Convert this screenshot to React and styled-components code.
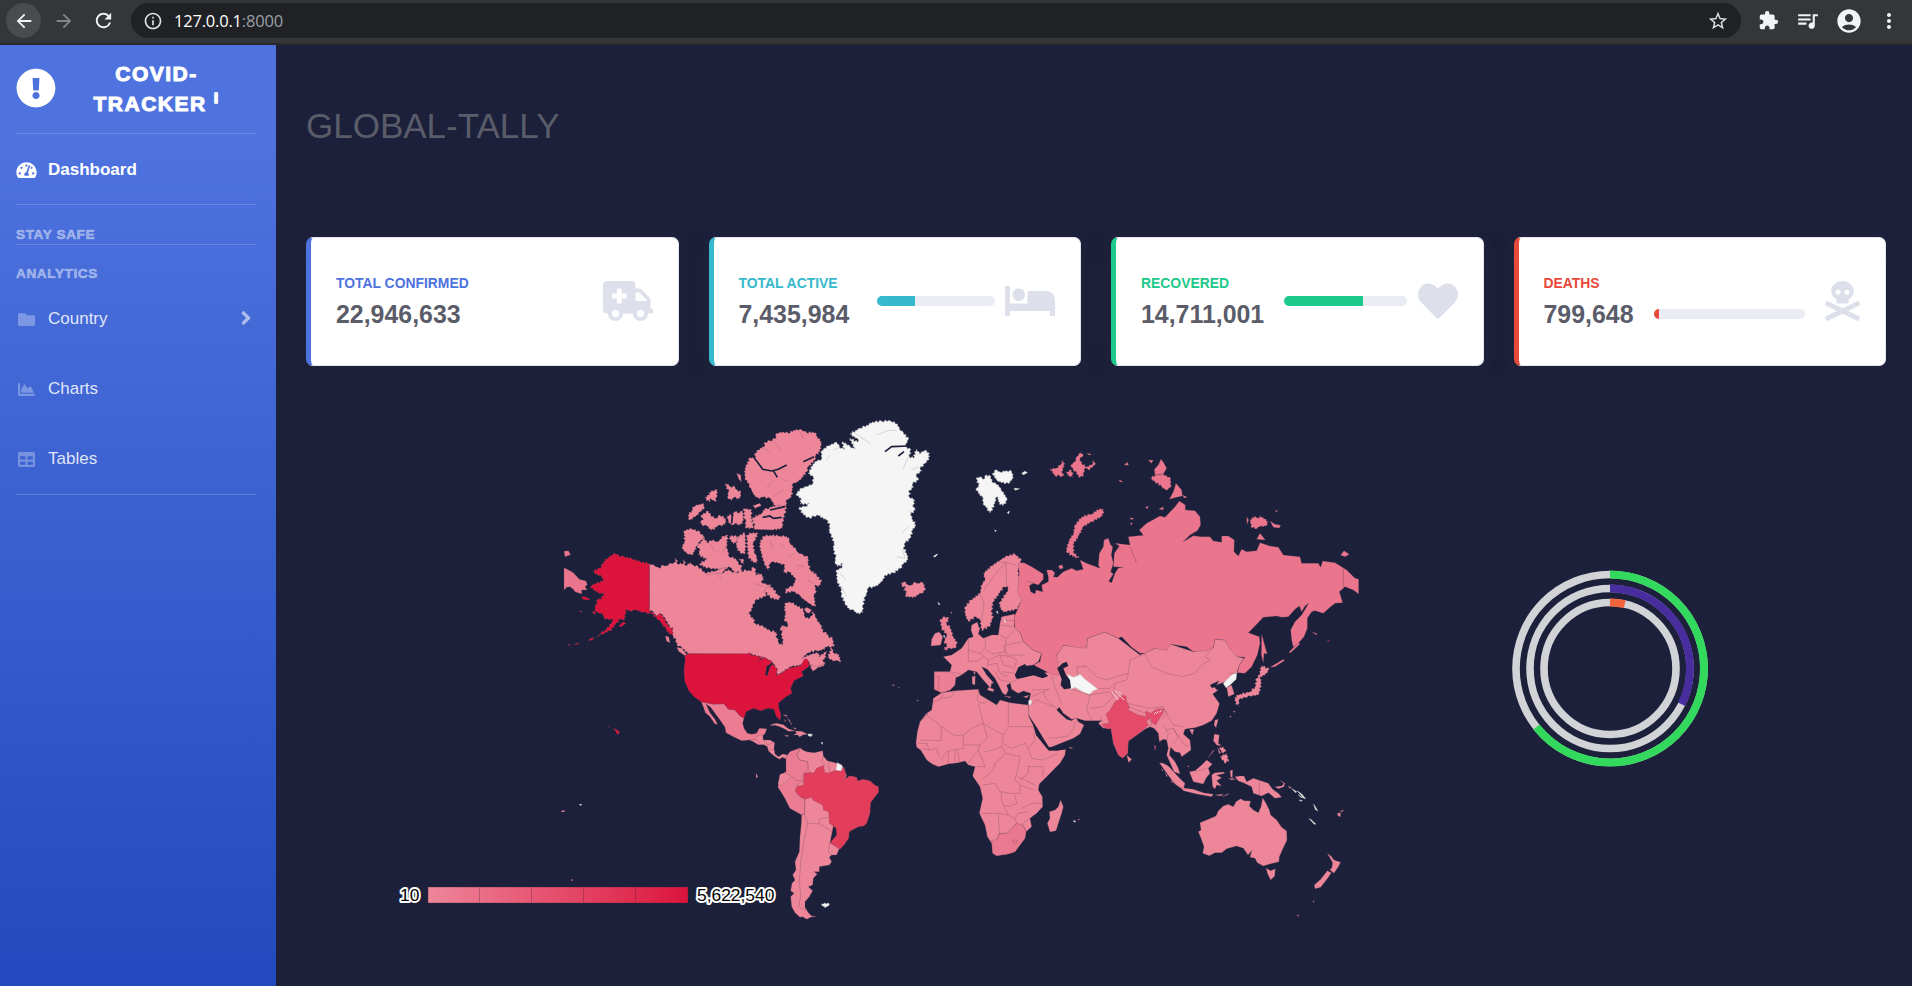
import React from "react";
import styled, { createGlobalStyle } from "styled-components";
import {
  FaExclamationCircle, FaTachometerAlt, FaFolder, FaChartArea, FaTable, FaAngleRight,
  FaAmbulance, FaBed, FaHeart, FaSkullCrossbones,
} from "react-icons/fa";
import {
  MdArrowBack, MdArrowForward, MdRefresh, MdInfoOutline, MdStarBorder, MdExtension,
  MdQueueMusic, MdAccountCircle, MdMoreVert,
} from "react-icons/md";

const NAVY = "#1c203a";

const GlobalStyle = createGlobalStyle`
  *, *::before, *::after { box-sizing: border-box; }
  html, body { margin: 0; padding: 0; overflow: hidden; background: ${NAVY}; }
  body { font-family: "Liberation Sans", Arial, sans-serif; }
  svg { display: block; flex: none; }
`;

const Page = styled.div`
  width: 1912px;
  height: 986px;
  display: flex;
  flex-direction: column;
`;

/* ---------- browser toolbar ---------- */
const Toolbar = styled.header`
  height: 45px;
  flex: none;
  display: flex;
  align-items: flex-start;
  padding: 3px 0 0 6px;
  background: #35363a;
  border-bottom: 2px solid #292a2b;
`;
const ToolButton = styled.span`
  width: 35px;
  height: 35px;
  margin-right: ${(p) => p.$gap || 0}px;
  border-radius: 50%;
  display: flex;
  align-items: center;
  justify-content: center;
  font-size: ${(p) => p.$size || 22}px;
  color: ${(p) => (p.$dim ? "#85868a" : "#f1f3f4")};
  background: ${(p) => (p.$active ? "#4a4b4f" : "transparent")};
`;
const AddressBar = styled.div`
  width: 1610px;
  height: 35px;
  margin-right: 10px;
  padding: 0 12px;
  border-radius: 18px;
  background: #202124;
  color: #dfe1e5;
  display: flex;
  align-items: center;
`;
const Url = styled.span`
  flex: 1;
  margin-left: 11px;
  font: 16.5px "Open Sans", "Noto Sans", sans-serif;
  letter-spacing: -0.2px;
  color: #fff;
`;
const Port = styled.span`
  color: #9aa0a6;
`;

/* ---------- sidebar ---------- */
const Body = styled.div`
  flex: 1;
  display: flex;
  min-height: 0;
`;
const Sidebar = styled.nav`
  width: 276px;
  flex: none;
  padding: 0 20px 0 16px;
  background: linear-gradient(180deg, #4e73df 10%, #224abe 100%);
`;
const Brand = styled.div`
  height: 88px;
  padding-bottom: 2px;
  display: flex;
  align-items: center;
  color: #fff;
`;
const BrandName = styled.div`
  flex: 1;
  padding: 2px 0 0 1px;
  text-align: center;
  font-size: 21px;
  font-weight: 700;
  line-height: 30px;
  letter-spacing: 1.5px;
  -webkit-text-stroke: 1px #fff;
  sup { font-size: 14.5px; line-height: 0; vertical-align: 8px; -webkit-text-stroke-width: 1.6px; }
`;
const Divider = styled.hr`
  height: 1px;
  margin: 0;
  border: 0;
  background: rgba(255, 255, 255, 0.17);
`;
const Heading = styled.div`
  height: ${(p) => p.$height}px;
  padding-top: ${(p) => p.$top}px;
  font-size: 13.6px;
  line-height: 16px;
  font-weight: 700;
  letter-spacing: 0.6px;
  color: rgba(255, 255, 255, 0.42);
  -webkit-text-stroke: 0.7px rgba(255, 255, 255, 0.35);
`;
const NavItem = styled.div`
  height: 70px;
  padding-top: ${(p) => (p.$active ? 2 : 0)}px;
  display: flex;
  align-items: center;
  font-size: 17px;
  font-weight: ${(p) => (p.$active ? 700 : 400)};
  color: ${(p) => (p.$active ? "#fff" : "rgba(255,255,255,.85)")};
  > svg:first-child {
    width: 21px;
    height: ${(p) => (p.$active ? 18 : 17)}px;
    margin-right: 11px;
    color: ${(p) => (p.$active ? "#fff" : "rgba(255,255,255,.3)")};
  }
`;
const NavLabel = styled.span`
  flex: 1;
`;
const Caret = styled(FaAngleRight)`
  width: 20px;
  height: 22px;
  margin: -3px 0 0;
  color: rgba(255, 255, 255, 0.55);
`;

/* ---------- main area ---------- */
const Main = styled.main`
  flex: 1;
  min-width: 0;
  padding: 0 26px 0 30px;
  background: ${NAVY};
`;
const Title = styled.h1`
  height: 192px;
  margin: 0;
  padding-top: 60px;
  font-size: 35px;
  line-height: 42px;
  font-weight: 400;
  color: #5a5c69;
`;
const Cards = styled.section`
  display: grid;
  grid-template-columns: repeat(4, 1fr);
  gap: 30px;
`;
const Card = styled.article`
  height: 129px;
  padding: 0 25px 2px;
  display: flex;
  align-items: center;
  justify-content: space-between;
  background: #fff;
  border: 1px solid #e3e6f0;
  border-left: 5px solid ${(p) => p.$color};
  border-radius: 7px;
  box-shadow: 0 3px 34px rgba(58, 59, 69, 0.08);
`;
const Stat = styled.div`
  flex: none;
`;
const StatLabel = styled.div`
  font-size: 13.9px;
  line-height: 20px;
  font-weight: 700;
  color: ${(p) => p.$color};
`;
const StatValue = styled.div`
  margin-top: 6px;
  font-size: 24.9px;
  line-height: 30px;
  font-weight: 700;
  color: #5a5c69;
`;
const Track = styled.div`
  width: ${(p) => p.$width}px;
  height: 10px;
  margin-left: auto;
  margin-right: ${(p) => p.$right}px;
  margin-top: ${(p) => p.$drop || 0}px;
  border-radius: 6px;
  overflow: hidden;
  background: #eaecf4;
`;
const Fill = styled.div`
  height: 100%;
  width: ${(p) => p.$value}%;
  background: ${(p) => p.$color};
`;
const CardIcon = styled.div`
  color: #dddfeb;
  svg { width: ${(p) => p.$width}px; height: 40px; }
`;
const Charts = styled.section`
  display: flex;
  align-items: flex-start;
  padding-top: 30px;
`;
const MapSvg = styled.svg`
  width: 1160px;
  height: 560px;
`;
const RingSvg = styled.svg`
  width: 220px;
  height: 220px;
  margin: 162px 0 0 34px;
`;
const ScaleLabel = styled.text`
  font-size: 17.4px;
  fill: #000;
  stroke: #fff;
  stroke-width: 4px;
  stroke-linejoin: round;
  paint-order: stroke;
`;

const PINK = "#ee869a", ROSE = "#ea758c", RED = "#dc143c", BRAZIL = "#e23e5c", INDIA = "#e54b69", NODATA = "#f5f5f5";

/* Outlines are kept at three units per pixel, one sheet for each hemisphere. */
const west = [
  // Canada mainland
  [PINK, "328,461 344,467 358,475 368,465 380,467 392,460 402,458 408,443 414,463 421,456 428,462 433,448 437,467 452,457 460,465 475,470 486,480 495,489 520,484 530,488 543,475 546,490 565,478 578,488 585,480 592,490 600,470 605,484 618,480 630,484 640,470 648,480 646,495 656,488 672,500 665,518 685,524 694,520 690,533 680,545 675,560 650,568 640,582 640,592 629,605 632,620 640,622 645,640 670,650 690,662 710,665 710,683 716,687 716,698 726,706 730,690 724,685 726,668 721,655 725,645 740,652 742,640 732,628 736,610 732,590 738,578 750,575 770,585 790,600 795,620 806,626 815,617 820,604 825,618 832,628 845,650 848,664 860,668 865,680 878,685 882,710 860,711 845,722 830,722 805,728 785,745 810,733 838,727 836,740 862,722 855,735 860,740 848,750 857,758 850,768 835,770 818,784 812,772 808,758 798,747 785,765 755,770 740,778 725,790 708,797 712,780 700,762 685,750 660,740 630,732 443,731 425,712 410,705 408,690 400,680 395,672 399,658 388,650 376,628 362,612 348,618 340,606 328,604", 1],
  [RED, "225,430 236,437 252,440 275,446 300,455 328,461 328,604 340,606 348,618 362,610 376,632 388,650 399,658 396,674 386,672 376,655 362,635 350,625 335,612 318,608 302,605 285,600 275,606 262,598 256,612 258,620 250,630 240,628 228,643 210,662 200,668 185,672 170,680 178,672 195,660 205,652 215,635 218,628 205,628 192,625 188,614 176,608 168,610 166,596 162,588 172,580 165,570 180,568 195,548 185,552 168,545 150,530 165,520 188,514 185,498 165,492 158,483 180,475 190,455 205,442", 1],
  [RED, "144,692 150,686 163,682 158,689"], [RED, "103,704 110,699 120,702 110,703"], [RED, "85,702 92,705 87,707"],
  [RED, "124,560 136,560 150,567 142,571 128,567"], [RED, "118,602 127,604 122,607"], [RED, "236,648 250,635 258,640 244,650"], [RED, "156,606 166,604 164,614"],
  [RED, "443,731 625,731 627,726 632,734 660,740 668,738 655,752 675,742 685,750 698,755 692,762 680,768 676,795 682,797 690,770 700,762 712,780 708,796 725,790 745,775 782,767 793,748 798,746 804,750 808,768 785,785 790,798 770,808 762,812 752,835 756,850 738,860 716,878 716,892 723,915 720,931 708,918 702,898 685,895 662,902 640,895 618,905 612,925 600,918 584,900 565,898 552,882 520,883 484,876 460,858 445,840 434,812 432,780 436,745 432,735 440,736"],
  [PINK, "376,678 386,680 390,698 380,694"], [PINK, "410,712 425,715 441,735 432,735 416,724"],
  // Ellesmere
  [PINK, "645,130 660,114 672,110 675,97 690,92 705,86 710,70 730,65 745,70 760,60 785,59 800,68 818,65 830,72 832,80 845,95 840,125 827,137 825,150 805,170 800,185 790,200 775,215 758,222 758,240 755,262 742,268 738,285 735,292 720,287 708,292 700,280 690,265 668,262 655,265 640,255 632,240 628,225 615,205 614,175 630,143 645,143", 1],
  [PINK, "640,322 665,310 668,300 680,296 700,288 740,285 735,310 728,335 728,355 700,360 640,358 645,345 636,335", 1],
  [PINK, "590,190 602,195 604,216 597,208"],
  [PINK, "555,220 565,222 572,230 585,230 592,240 603,246 600,268 582,262 575,272 562,262 566,245", 1],
  [PINK, "494,262 508,255 506,248 515,241 532,239 530,262 525,275 512,265 508,277", 1],
  [PINK, "443,315 455,302 460,290 478,282 492,282 492,298 480,305 475,315 462,320 458,330 445,327", 1],
  [PINK, "476,338 490,330 482,316 505,303 512,316 528,325 540,315 558,325 556,345 540,345 530,352 515,362 500,348 486,345", 1],
  [PINK, "562,318 570,310 578,320 580,302 592,308 608,302 612,330 600,348 590,340 575,345 565,335", 1],
  [PINK, "612,295 635,300 635,320 640,355 628,357 615,350 618,335 612,320", 1], [PINK, "638,285 660,280 665,290 645,295"],
  [PINK, "432,362 455,356 480,366 495,382 480,395 470,408 464,425 455,435 440,430 425,415 433,395", 1],
  [PINK, "470,408 482,395 495,384 500,398 520,388 530,395 540,388 550,378 564,376 560,410 568,440 588,445 595,460 606,470 600,486 585,488 570,472 545,478 510,475 490,472 478,460 500,448 475,435 480,420", 1],
  [PINK, "495,490 520,486 545,475 560,474 545,490 525,492 505,495"],
  [PINK, "566,377 595,378 590,398 580,402 573,395", 1], [PINK, "592,380 615,368 618,420 612,432 600,428 588,412", 1],
  [PINK, "620,375 640,366 655,370 640,398 642,425 650,440 652,460 640,458 625,440 622,420", 1], [PINK, "598,445 612,450 612,462 602,458", 1],
  [PINK, "670,378 690,375 720,378 740,378 748,388 750,400 768,418 775,428 790,435 805,442 805,460 812,480 830,495 845,515 835,532 825,525 828,548 822,555 826,590 812,585 795,572 785,565 778,555 760,545 735,548 740,532 757,530 768,508 748,486 730,490 735,465 715,460 700,455 690,462 685,482 673,460 663,430 658,400", 1],
  [PINK, "672,542 685,528 700,535 712,552 722,562 712,570 690,562", 1], [PINK, "792,598 800,592 815,600 808,610 800,608"], [PINK, "721,655 730,646 733,655 725,662"],
  [PINK, "862,743 875,712 882,730 890,728 901,742 900,758 892,752 878,752", 1],
  [PINK, "818,784 812,762 825,770 845,765 857,758 850,768 835,772"],
  [ROSE, "72,473 90,482 100,488 118,508 138,513 142,524 135,530 142,540 125,540 125,552 105,545 100,538 90,530 80,532 72,540"],
  [ROSE, "72,424 85,422 92,434 75,440"],
  // Greenland
  [NODATA, "960,55 980,46 998,36 1025,34 1052,33 1072,42 1078,58 1090,68 1105,88 1098,100 1100,112 1112,120 1108,140 1120,145 1130,118 1138,132 1145,125 1160,122 1170,139 1155,160 1140,175 1145,182 1128,195 1135,210 1118,220 1120,232 1108,240 1108,262 1125,270 1118,285 1125,300 1112,312 1118,330 1128,345 1118,360 1110,385 1096,398 1090,412 1100,430 1104,448 1090,462 1080,475 1060,488 1035,495 1028,512 1020,520 1005,530 985,533 982,545 975,560 968,585 968,607 950,610 942,600 930,600 915,580 905,555 903,535 892,515 890,480 905,475 908,460 893,470 885,455 888,440 880,420 882,400 875,375 868,368 870,345 860,330 835,316 822,318 810,325 790,315 778,292 795,290 810,281 780,282 785,268 768,252 785,235 800,230 818,222 820,200 805,190 825,155 845,148 845,122 865,108 890,97 898,110 912,120 908,95 930,110 945,118 930,85 952,97 955,88 930,72", 1],
  [PINK, "1084,517 1098,516 1103,524 1115,525 1125,516 1135,520 1142,515 1150,517 1156,540 1145,550 1135,555 1118,564 1095,558 1100,545 1088,542 1098,532 1085,528", 1],
  // Mexico, Central America and the Caribbean
  ["#ec7c92", "484,876 520,883 552,882 565,898 584,900 600,918 612,925 608,940 612,955 622,970 635,973 650,970 658,955 680,956 676,970 668,978 652,978 648,990 628,990 605,992 580,980 558,968 555,952 540,930 525,910 512,892 498,882 510,908 525,928 533,943 525,942 508,918 496,908 490,890"],
  [PINK, "628,990 648,990 648,982 655,976 668,974 670,990 690,990 704,998 702,1015 705,1032 716,1040 728,1032 740,1034 744,1042 735,1046 728,1042 718,1048 708,1042 695,1032 685,1022 682,1010 672,1004 655,1004 640,995"],
  [PINK, "690,947 698,942 710,940 730,944 745,956 765,963 745,964 734,957 720,950 705,946"],
  [PINK, "765,963 785,964 803,973 790,974 778,981 774,975 760,975 770,970"], [PINK, "733,975 748,977 740,980"],
  [PINK, "728,914 742,916 740,920"], [PINK, "742,922 752,935 748,935"], [PINK, "733,928 738,932 735,935"], [PINK, "752,935 756,945 752,942"], [PINK, "760,952 770,956 764,958"],
  [NODATA, "804,972 817,973 814,979 806,978"], [NODATA, "843,997 848,998 847,1003"],
  // South America
  [PINK, "738,1042 750,1025 765,1020 782,1014 788,1020 800,1025 822,1028 848,1022 850,1038 862,1052 885,1058 905,1064 912,1080 920,1095 900,1150 870,1298 898,1315 890,1335 875,1335 868,1342 875,1355 868,1365 838,1370 838,1385 822,1385 832,1392 820,1405 818,1425 805,1430 818,1442 808,1460 795,1475 795,1492 805,1508 815,1518 830,1519 812,1522 800,1528 788,1520 780,1522 765,1508 755,1490 752,1460 762,1450 752,1442 756,1420 765,1410 758,1395 768,1380 765,1355 778,1325 780,1280 784,1240 785,1214 750,1195 735,1165 722,1140 714,1132 718,1115 720,1098 738,1085 740,1060"],
  ["#ec7c92", "738,1042 750,1025 782,1014 770,1035 780,1050 803,1055 805,1080 790,1090 790,1112 765,1130 778,1160 795,1168 793,1212 785,1214 750,1195 735,1165 714,1132 720,1098 738,1085"],
  [PINK, "720,1093 735,1088 752,1098 745,1112 720,1128 714,1122"],
  [BRAZIL, "792,1090 810,1087 820,1090 830,1075 850,1066 855,1088 868,1088 888,1080 905,1082 912,1070 918,1095 912,1108 930,1097 950,1102 953,1112 970,1108 990,1112 1005,1126 1016,1130 1016,1147 1005,1160 992,1178 990,1210 980,1240 972,1248 955,1250 928,1265 926,1285 912,1305 900,1318 888,1310 870,1298 890,1275 888,1255 868,1240 866,1205 850,1200 848,1185 818,1170 815,1162 795,1168 780,1160 765,1143 772,1128 790,1126"],
  [NODATA, "892,1058 907,1068 903,1082 888,1080"],
  [NODATA, "845,1482 855,1479 868,1482 865,1488 855,1493 847,1488", 1],
  [PINK, "648,1090 654,1100 648,1104"], [RED, "220,955 228,958 240,966 232,974 227,964"], [RED, "203,950 209,949 207,952"],
  [PINK, "63,1203 75,1201 73,1206 66,1206"], [NODATA, "118,1183 125,1184 122,1187"], [PINK, "93,1408 97,1408 97,1413 94,1413"],
  [PINK, "1056,824 1063,824 1062,829"], [PINK, "1074,830 1080,832 1076,833"], [PINK, "1129,871 1136,871 1133,874"], [NODATA, "1181,439 1192,432 1190,436 1183,441"],
];

const east = [
  // Africa
  [PINK, "125,848 165,842 235,838 240,855 262,868 290,885 300,870 330,878 385,885 388,915 400,945 410,975 430,995 447,1020 470,1022 497,1018 495,1035 480,1060 465,1075 440,1100 418,1122 415,1140 427,1160 428,1190 410,1210 390,1225 395,1250 378,1265 375,1285 345,1325 325,1332 290,1337 278,1330 275,1300 262,1280 255,1245 238,1210 248,1165 240,1130 218,1098 225,1070 205,1065 195,1053 175,1058 145,1062 115,1070 98,1063 80,1050 62,1020 50,1012 48,1000 52,965 60,935 80,910 95,900 100,865"],
  ["#ea788e", "275,1290 290,1290 298,1270 325,1270 350,1240 368,1245 378,1265 375,1285 345,1325 325,1332 290,1337 278,1330"],
  // Asia south of Russia
  [PINK, "470,735 490,706 560,712 562,685 615,666 655,685 720,735 765,715 812,703 880,725 940,712 945,688 975,690 1012,740 1032,745 1018,765 1010,790 975,815 950,825 957,812 930,825 936,834 945,832 948,838 955,840 938,852 957,878 958,882 950,910 935,932 910,945 885,953 870,955 855,958 850,972 870,990 873,1020 845,1040 840,1028 825,1025 812,1012 808,1035 825,1055 835,1075 840,1092 822,1085 812,1062 800,1035 805,1015 800,990 790,988 778,995 775,970 762,955 750,950 735,958 685,993 683,1030 668,1044 655,1035 640,1000 633,955 610,955 595,940 605,932 555,932 530,925 515,928 490,910 478,892 470,900 480,910 500,928 515,932 528,922 535,935 552,945 540,972 520,985 445,1015 435,1000 415,965 388,925 385,885 392,850 370,843 355,850 335,838 330,815 350,805 400,795 450,785 470,790"],
  // Continental Europe
  [PINK, "213,660 215,645 232,636 236,650 240,655 235,672 250,685 275,675 295,675 300,640 305,620 345,612 343,650 362,670 370,695 400,720 425,730 415,755 400,765 360,770 345,795 350,808 330,820 320,826 325,840 318,855 308,850 298,830 285,805 262,778 245,770 260,795 282,820 275,820 272,835 250,810 230,785 205,780 185,795 165,805 165,825 150,840 125,848 103,838 103,785 150,785 155,765 130,740 155,735 185,715 205,685 220,680"],
  [PINK, "195,590 213,570 240,550 245,525 255,508 250,490 275,468 300,450 322,437 345,432 365,450 355,480 358,520 367,570 350,598 310,607 298,590 300,575 322,545 325,532 312,530 300,548 280,575 275,600 278,625 268,650 245,662 240,630 228,620 205,635 195,615", 1],
  ["#ec7f94", "103,785 150,785 168,798 165,825 150,840 125,848 103,838"],
  ["#ec7f94", "120,628 135,620 147,625 140,642 150,650 160,680 172,700 165,715 150,715 130,722 140,705 132,695 140,675 125,655", 1],
  [PINK, "93,708 95,688 105,670 118,666 128,680 122,705"],
  [PINK, "265,832 282,838 280,845 262,840"], [PINK, "216,800 226,798 225,825 217,822"], [PINK, "220,785 226,785 224,796"], [PINK, "312,858 332,860 330,864"], [PINK, "370,860 388,855 380,864"],
  // Russia
  [ROSE, "355,460 372,458 395,470 430,492 430,508 415,525 395,518 382,513 400,520 388,527 392,545 405,552 408,540 428,545 425,525 445,515 445,500 440,480 455,480 465,488 460,500 472,502 490,485 515,475 530,482 550,478 540,450 560,460 600,475 595,465 598,430 610,410 612,390 625,385 632,405 638,410 634,435 640,460 632,485 640,492 626,514 635,518 645,490 655,474 670,472 640,470 643,430 658,408 645,400 690,405 685,380 730,376 718,360 740,340 780,318 795,322 825,290 838,273 856,285 856,300 885,302 900,320 902,345 892,362 870,375 850,395 880,377 905,380 930,380 940,393 965,397 965,378 985,378 1003,390 1002,425 1015,438 1025,418 1040,425 1070,422 1080,398 1110,408 1135,412 1150,435 1175,438 1200,440 1205,460 1255,460 1262,472 1268,453 1305,458 1340,480 1365,505 1376,508 1376,552 1360,540 1335,530 1318,545 1328,578 1305,580 1290,592 1270,610 1245,602 1235,605 1222,625 1222,655 1212,680 1195,700 1180,712 1175,690 1172,660 1185,635 1205,615 1226,580 1215,588 1205,605 1198,588 1185,598 1165,620 1145,622 1130,618 1090,622 1068,645 1045,668 1078,680 1080,700 1072,735 1055,770 1035,790 1012,788 1018,765 1035,742 1012,740 990,718 975,690 945,688 940,712 920,722 880,725 860,710 812,703 800,722 765,715 735,730 720,730 695,712 665,680 655,685 615,666 600,672 562,685 560,715 530,712 490,706 480,722 470,735 475,755 472,775 475,795 460,795 430,780 400,765 420,755 425,730 400,720 370,695 362,670 345,655 343,620 365,570 352,545 355,520 358,490"],
  [ROSE, "600,295 612,297 608,318 575,335 550,350 538,375 522,400 520,425 537,445 518,440 498,425 505,395 520,370 525,345 545,320 575,312", 1],
  [ROSE, "783,147 792,160 800,175 790,192 765,195 763,178 775,165"], [ROSE, "750,205 765,195 790,193 812,205 812,232 798,241 785,230 765,215", 1], [ROSE, "828,220 845,240 847,258 830,262 808,268 820,245"], [ROSE, "745,150 760,151 754,160"],
  [ROSE, "1050,330 1065,318 1075,325 1080,316 1105,335 1098,348 1080,350 1065,357 1052,348", 1], [ROSE, "1070,388 1080,370 1096,390"], [ROSE, "1110,333 1125,343 1142,346 1138,354 1120,352"], [ROSE, "1040,320 1046,330 1041,343"], [ROSE, "1125,303 1134,300 1130,306"],
  [ROSE, "1322,435 1332,422 1348,433 1335,440"], [ROSE, "475,468 486,464 490,474 480,478"],
  [ROSE, "450,176 470,174 480,165 490,152 494,170 485,185 495,200 478,197 465,198", 1], [ROSE, "500,185 515,180 520,200 502,198", 1], [ROSE, "512,165 525,155 530,140 545,124 548,140 540,148 545,160 560,170 575,165 582,150 585,165 565,180 555,175 548,200 535,200 530,188 520,180", 1], [ROSE, "560,130 575,133 568,136"],
  [ROSE, "672,165 682,157 686,166"], [ROSE, "656,209 665,212 668,217 660,215"], [ROSE, "690,323 702,325 694,330"], [ROSE, "690,338 698,340 694,346"], [ROSE, "736,292 746,288 742,297"], [ROSE, "776,297 790,290 790,300"], [ROSE, "848,255 862,262 852,264"],
  [ROSE, "1085,673 1090,690 1098,720 1102,732 1092,730 1090,758 1084,735"], [ROSE, "1236,665 1252,672 1248,675"], [ROSE, "1195,698 1200,702 1170,730 1168,725"], [ROSE, "1110,772 1150,748 1153,752 1125,770"],
  [RED, "1281,692 1289,691 1286,695"],
  // Japan, Korea and neighbours
  [PINK, "1084,765 1108,778 1095,796 1080,800 1085,820 1075,855 1050,858 1035,862 1018,868 1015,890 1003,872 1003,862 1020,852 1050,845 1065,830 1070,805 1078,795", 1],
  [NODATA, "970,820 985,805 995,795 1010,788 1008,808 990,825 978,833"], [PINK, "980,832 995,826 1003,852 985,860"],
  [PINK, "945,930 955,928 948,953 942,945"], [PINK, "868,958 882,958 877,975"], [PINK, "1000,903 1006,903 1003,908"], [PINK, "989,918 994,918 991,923"],
  [NODATA, "503,793 520,802 530,798 540,793 555,808 593,837 580,842 568,853 548,845 525,832 512,838"],
  [INDIA, "645,875 655,868 668,855 678,858 680,875 688,890 685,900 715,915 738,920 737,903 752,910 765,900 775,897 790,896 790,908 775,930 768,945 755,938 752,925 745,928 750,942 735,955 710,975 685,993 683,1030 668,1044 655,1035 640,1000 633,955 625,958 610,950 606,942 628,940 618,913 630,900"],
  [PINK, "740,930 752,930 755,945 743,945"], [NODATA, "386,872 395,870 393,884 387,884"],
  [PINK, "680,1035 695,1048 686,1058"], [INDIA, "763,1006 768,1008 765,1022"],
  // South-east Asia
  [PINK, "778,1058 790,1060 805,1068 830,1095 842,1108 855,1120 850,1140 825,1122 800,1090"], [PINK, "845,1133 880,1138 910,1148 940,1153 935,1160 890,1152 850,1142"],
  [PINK, "868,1085 885,1082 905,1065 920,1050 937,1062 925,1075 930,1090 918,1105 910,1122 880,1115"],
  [PINK, "935,1095 945,1088 970,1086 975,1090 950,1096 965,1103 950,1112 965,1128 950,1125 945,1137 938,1130"],
  [PINK, "943,972 958,975 955,1000 965,1008 950,1005 940,992"], [PINK, "958,1012 970,1010 978,1025 965,1028", 1], [PINK, "960,1040 980,1030 986,1055 972,1058", 1], [PINK, "924,1044 940,1020 942,1022"], [PINK, "952,1012 962,1028 958,1032"],
  [PINK, "945,1155 970,1152 962,1158"], [PINK, "965,1160 988,1149 982,1155"], [PINK, "990,1082 998,1080 997,1105 992,1100"], [PINK, "985,1105 1010,1107 995,1110"],
  [PINK, "1005,1100 1020,1098 1032,1098 1040,1115 1060,1105 1105,1120 1118,1138 1135,1150 1145,1162 1125,1165 1105,1148 1085,1158 1060,1150 1055,1130 1030,1118 1015,1113"], [PINK, "1125,1130 1145,1128 1155,1118 1152,1130 1135,1136"], [PINK, "1140,1110 1157,1122 1152,1122"],
  [PINK, "783,1075 790,1082 787,1083"], [PINK, "795,1088 803,1098 800,1100"], [PINK, "812,1105 820,1118 816,1118"], [PINK, "862,1067 868,1068 865,1072"],
  [PINK, "1165,1127 1175,1133 1168,1135"], [NODATA, "1175,1136 1190,1145 1187,1148"], [NODATA, "1192,1143 1205,1152 1217,1166 1210,1164"], [NODATA, "1195,1155 1208,1163 1203,1162"], [NODATA, "1198,1170 1207,1172 1202,1174"],
  [NODATA, "1241,1183 1246,1190 1253,1203 1246,1198"], [NODATA, "1228,1226 1232,1228 1247,1242 1243,1243"], [PINK, "1312,1210 1322,1208 1321,1220 1314,1218"], [PINK, "1320,1203 1333,1200 1325,1206"],
  // Australia and New Zealand
  [PINK, "900,1238 925,1228 948,1218 955,1202 970,1188 985,1183 1000,1190 1008,1175 1022,1166 1032,1172 1052,1173 1048,1188 1060,1200 1075,1208 1083,1190 1088,1163 1098,1180 1108,1200 1112,1215 1130,1230 1145,1252 1160,1263 1161,1290 1148,1318 1138,1340 1137,1355 1110,1362 1090,1368 1072,1358 1065,1345 1050,1342 1055,1322 1044,1335 1030,1315 1010,1308 980,1316 965,1328 945,1328 928,1337 908,1330 912,1310 903,1285 895,1265 903,1260"],
  [PINK, "1098,1374 1112,1382 1126,1376 1124,1398 1112,1410 1103,1392"],
  [PINK, "1282,1330 1293,1338 1302,1350 1322,1357 1315,1370 1302,1390 1290,1380 1296,1372 1298,1358"], [PINK, "1282,1382 1294,1388 1285,1402 1275,1415 1262,1432 1245,1436 1243,1425 1262,1408"],
  [PINK, "1238,1473 1244,1472 1240,1477"], [PINK, "1191,1514 1197,1516 1194,1520"],
  [PINK, "482,1170 490,1190 485,1210 468,1262 450,1266 442,1240 450,1225 448,1205 465,1200 475,1190"],
  [NODATA, "520,1232 527,1233 524,1237"], [PINK, "533,1227 540,1228 536,1231"], [PINK, "506,1012 519,1013 512,1016"],
  // Svalbard and the far north Atlantic
  [NODATA, "230,203 245,202 250,208 260,195 272,200 275,215 295,225 303,240 315,255 321,270 318,280 308,287 295,275 295,262 288,262 285,280 270,308 258,292 250,280 248,262 235,250 229,235 236,225", 1], [NODATA, "278,190 290,180 300,186 320,182 335,185 340,203 325,220 305,218 290,210", 1],
  [NODATA, "365,190 375,184 382,188 370,194"], [NODATA, "342,235 358,236 346,241"], [NODATA, "322,308 328,303 326,312"], [NODATA, "284,360 289,362 286,365"], [NODATA, "101,439 112,433 106,440"], [NODATA, "114,577 120,583 117,585"], [PINK, "152,606 156,605 154,612"],
];

const seas = [
  "472,775 488,760 500,755 505,768 490,775 498,795 510,810 513,835 492,838 482,825 485,808",
  "345,795 355,772 375,762 385,775 400,766 408,768 400,778 430,785 445,798 428,805 400,796 375,802 352,807",
  "383,912 390,922 412,955 430,985 447,1012 500,1008 496,1018 447,1022 440,1015 422,992 408,975 402,950",
];

const westBorders =
  "M782,1015L770,1035 780,1050 803,1055 805,1078 812,1087M850,1038L845,1055 855,1068M868,1052L866,1070 870,1088M752,1098L770,1112 790,1112M795,1168L793,1212 803,1240 835,1242 840,1226 866,1222M785,1214L793,1212M803,1240L792,1290 783,1350 778,1410 782,1460 776,1490 798,1503M838,1240L862,1256 888,1276M870,1298L865,1325 876,1335M672,990L682,1005 700,998M685,1020L702,1018M652,990L660,1000";
const eastBorders =
  "M235,838L232,870 245,880 262,875M325,878V945M325,950H405M60,935L82,915 85,885 125,865 130,850M80,915L125,950 122,992 60,990M125,950L165,978 190,975 215,955 250,940 235,880M165,842L155,860 130,865M190,975L190,1015 160,1020 140,1025 122,1050M250,940L265,950 310,975 305,1010 280,1020 255,1025M250,940L262,985 240,1005 190,1005M325,950L310,975M400,950L405,990 385,1015 395,1045 425,1050 450,1042 475,1030M310,1000L335,1015 375,1000 385,1015M305,1010L318,1030 285,1060 280,1080 245,1110M318,1030L360,1040 355,1070 345,1110 360,1125 360,1150 330,1150 300,1145 285,1120 248,1125M240,1210L300,1210 325,1215 305,1175 303,1145M360,1125L400,1140M355,1100L405,1125M345,1155L350,1180 330,1190 310,1185M365,1195L395,1180 425,1180M295,1210L298,1270 290,1290M325,1215L345,1225 355,1210 385,1205M345,1225L350,1240 320,1268 298,1272M378,1265L368,1240 390,1225M340,1290L352,1290 348,1302 338,1296ZM385,1070L430,1070M430,1070L428,1100M360,1110L385,1090 385,1065M52,1000L80,1000 88,1020 65,1015M88,1020L110,1015 118,1040M145,1025V1060M165,1020V1056M173,1020L178,1056M205,1058L235,1020 240,1005M235,1020L255,1070 225,1070" +
  "M240,550L252,580 245,630M250,545L280,500 318,455M318,460L320,530M300,455L350,465M205,685L205,720 240,730 255,715 258,685M258,720L280,732 315,725 318,685 300,675M205,720L205,755 235,752 250,740M155,785L190,795M103,800L118,800 115,838M240,730L265,750 300,735 330,740 350,750 345,770M318,705L368,695M318,685L345,660M302,645L340,650M305,630L343,632M265,750L262,770M300,735L310,765 345,775M265,765L290,760 300,790 325,800M285,785L300,810 330,815M305,785L345,790M310,705L320,735 375,735" +
  "M470,845L455,800M395,840L450,838M395,860L430,845 445,840M430,845L440,870 475,900M392,885L410,870 460,890M445,985L500,980 520,960 525,935M470,845L485,880M530,770L560,770 590,800 620,810 650,800 685,790M530,770L535,800M593,835L630,835 645,820 680,810 685,790 690,750 735,730M735,730L755,770 800,790 845,800 885,790 905,765 930,750 915,740 940,712M513,838L570,855 560,900 575,930M570,855L630,845 640,860 610,890 570,895M645,820L640,850 665,855M608,935L600,920M685,890L738,910M680,880L750,895 790,890 800,910 785,930M790,895L820,945 850,950M800,960L820,955 850,1000 865,1010M790,945L805,970 800,990M820,955L835,985 820,1000M1078,1105V1155M1010,790L985,790M885,1085L920,1075M550,770L555,765";
const fjords =
  "M640,140L655,160 668,178 695,183 715,178 740,165M700,182L712,202M640,260L630,235M668,322L690,318 700,325 725,322M790,155L822,140M640,285L660,275 670,288 650,295M690,300L735,290M578,300L575,340M700,455L712,490 700,530M725,465L722,500M740,510L760,500M715,520L745,535M1035,125L1055,110 1105,108M1075,138L1092,125M775,565L815,588";
const fjordsLight =
  "M880,120L905,110M990,100L945,70M1010,75L1050,60 1070,62M1070,440L1095,445 1088,420M900,490L918,510M905,530L920,560M1090,175L1105,140M655,105L690,125M700,95L725,120M780,65L790,85M700,210L680,235M730,240L700,260M745,215L725,205M690,390L700,420M720,400L735,415M760,430L745,445M795,470L770,465M820,520L800,510M640,520L670,530M545,510L530,485M560,405L545,430M510,400L525,425M860,150L870,135M1115,180L1135,170M1105,350L1085,370M1110,300L1118,325";

/* Breaks the short edges of an outline into small notches, for fjord coasts. */
const notch = (pts) => {
  const out = [];
  pts.forEach(([x, y], i) => {
    const [nx, ny] = pts[(i + 1) % pts.length];
    const len = Math.hypot(nx - x, ny - y);
    out.push([x, y]);
    if (len > 60 || len < 7) return;
    const steps = Math.max(2, Math.round(len / 5));
    for (let k = 1; k < steps; k++) {
      const t = k / steps;
      const depth = (k % 2 ? 1 : -1) * (1.2 + ((x * 7 + y * 13 + k * 31) % 10) / 4);
      out.push([x + (nx - x) * t - ((ny - y) / len) * depth, y + (ny - y) * t + ((nx - x) / len) * depth]);
    }
  });
  return out;
};
const toPath = (points, rough) => {
  const pts = points.split(" ").map((p) => p.split(",").map(Number));
  return `M${(rough ? notch(pts) : pts).map(([x, y]) => `${x.toFixed(1)},${y.toFixed(1)}`).join("L")}Z`;
};
const Lands = ({ items }) => items.map(([fill, pts, rough], i) => (
  <path key={i} d={toPath(pts, rough)} fill={fill} stroke={fill === NODATA ? "rgba(205,205,205,.7)" : "rgba(100,75,95,.3)"} strokeWidth="2.4" strokeLinejoin="round" />
));

function WorldMap() {
  return (
    <MapSvg viewBox="306 396 1160 560">
      <defs>
        <linearGradient id="heat"><stop offset="0" stopColor="#ee869a" /><stop offset="1" stopColor={RED} /></linearGradient>
      </defs>
      <g transform="translate(540 410) scale(.33333)" fill="none">
        <Lands items={west} />
        <path d={westBorders} stroke="rgba(80,50,70,.25)" strokeWidth="3" />
        <path d={fjords} stroke={NAVY} strokeWidth="5" />
        <path d={fjordsLight} stroke="rgba(60,50,70,.18)" strokeWidth="3" />
      </g>
      <g transform="translate(900 410) scale(.33333)" fill="none">
        <Lands items={east} />
        {seas.map((s) => <path key={s} d={toPath(s)} fill={NAVY} />)}
        <path d={eastBorders} stroke="rgba(80,50,70,.24)" strokeWidth="3" strokeLinejoin="round" />
        <path d="M1330,475V530M250,655L260,650M640,405L662,420M690,410L710,460M850,393L885,368" stroke="rgba(80,50,70,.3)" strokeWidth="3" />
        <path d="M635,845L655,870M645,841L672,870M657,845L665,853M762,913L768,906M770,911L776,903M779,907L785,900" stroke="#f0d5da" strokeWidth="3" />
        <path d="M290,603L294,610M313,628L316,638M131,676L134,682" stroke="#ddd" strokeWidth="4" />
      </g>
      <rect x="428" y="887" width="260" height="16" fill="url(#heat)" stroke="rgba(60,40,60,.35)" strokeWidth="1" />
      <path d="M479.5 887.5v15M531.5 887.5v15M583.5 887.5v15M635.5 887.5v15" stroke="rgba(60,20,50,.28)" />
      <ScaleLabel x="400" y="900.8">10</ScaleLabel>
      <ScaleLabel x="697" y="900.8">5,622,540</ScaleLabel>
    </MapSvg>
  );
}

const rings = [
  { r: 94, share: 64.3, color: "#32d95c" },
  { r: 80, share: 32.4, color: "#482d9e" },
  { r: 66, share: 3.6, color: "#f2643c" },
];
function RingChart() {
  return (
    <RingSvg viewBox="-110 -110.5 220 220">
      {rings.map(({ r, share, color }) => (
        <g key={r} fill="none" strokeWidth="7.6" transform="rotate(-90)">
          <circle r={r} stroke="#d2d3d7" />
          <circle r={r} stroke={color} strokeWidth="8" pathLength="100" strokeDasharray={`${share} 100`} />
        </g>
      ))}
    </RingSvg>
  );
}

const stats = [
  { label: "TOTAL CONFIRMED", value: "22,946,633", color: "#4e73df", Icon: FaAmbulance, width: 50 },
  { label: "TOTAL ACTIVE", value: "7,435,984", color: "#36b9cc", Icon: FaBed, width: 50, bar: { $width: 118, $right: 10 }, share: 32.4 },
  { label: "RECOVERED", value: "14,711,001", color: "#1cc88a", Icon: FaHeart, width: 40, bar: { $width: 123, $right: 11 }, share: 64.3 },
  { label: "DEATHS", value: "799,648", color: "#e74a3b", Icon: FaSkullCrossbones, width: 35, bar: { $width: 151, $right: 20, $drop: 27 }, share: 3.5 },
];

export default function App() {
  return (
    <Page>
      <GlobalStyle />
      <Toolbar>
        <ToolButton $active $gap={5}><MdArrowBack /></ToolButton>
        <ToolButton $dim $gap={5}><MdArrowForward /></ToolButton>
        <ToolButton $gap={10}><MdRefresh size={23} /></ToolButton>
        <AddressBar>
          <MdInfoOutline size={20} />
          <Url>127.0.0.1<Port>:8000</Port></Url>
          <MdStarBorder size={22} />
        </AddressBar>
        <ToolButton $gap={4} $size={21}><MdExtension /></ToolButton>
        <ToolButton $gap={6} $size={25}><MdQueueMusic /></ToolButton>
        <ToolButton $gap={5} $size={28}><MdAccountCircle /></ToolButton>
        <ToolButton $size={24}><MdMoreVert /></ToolButton>
      </Toolbar>
      <Body>
        <Sidebar>
          <Brand>
            <FaExclamationCircle size={40} />
            <BrandName>COVID-<br />TRACKER <sup>I</sup></BrandName>
          </Brand>
          <Divider />
          <NavItem $active><FaTachometerAlt /><NavLabel>Dashboard</NavLabel></NavItem>
          <Divider />
          <Heading $top={22} $height={39}>STAY SAFE</Heading>
          <Divider />
          <Heading $top={21} $height={39}>ANALYTICS</Heading>
          <NavItem><FaFolder /><NavLabel>Country</NavLabel><Caret /></NavItem>
          <NavItem><FaChartArea /><NavLabel>Charts</NavLabel></NavItem>
          <NavItem><FaTable /><NavLabel>Tables</NavLabel></NavItem>
          <Divider />
        </Sidebar>
        <Main>
          <Title>GLOBAL-TALLY</Title>
          <Cards>
            {stats.map(({ label, value, color, Icon, width, bar, share }) => (
              <Card key={label} $color={color}>
                <Stat>
                  <StatLabel $color={color}>{label}</StatLabel>
                  <StatValue>{value}</StatValue>
                </Stat>
                {bar && <Track {...bar}><Fill $value={share} $color={color} /></Track>}
                <CardIcon $width={width}><Icon /></CardIcon>
              </Card>
            ))}
          </Cards>
          <Charts>
            <WorldMap />
            <RingChart />
          </Charts>
        </Main>
      </Body>
    </Page>
  );
}
